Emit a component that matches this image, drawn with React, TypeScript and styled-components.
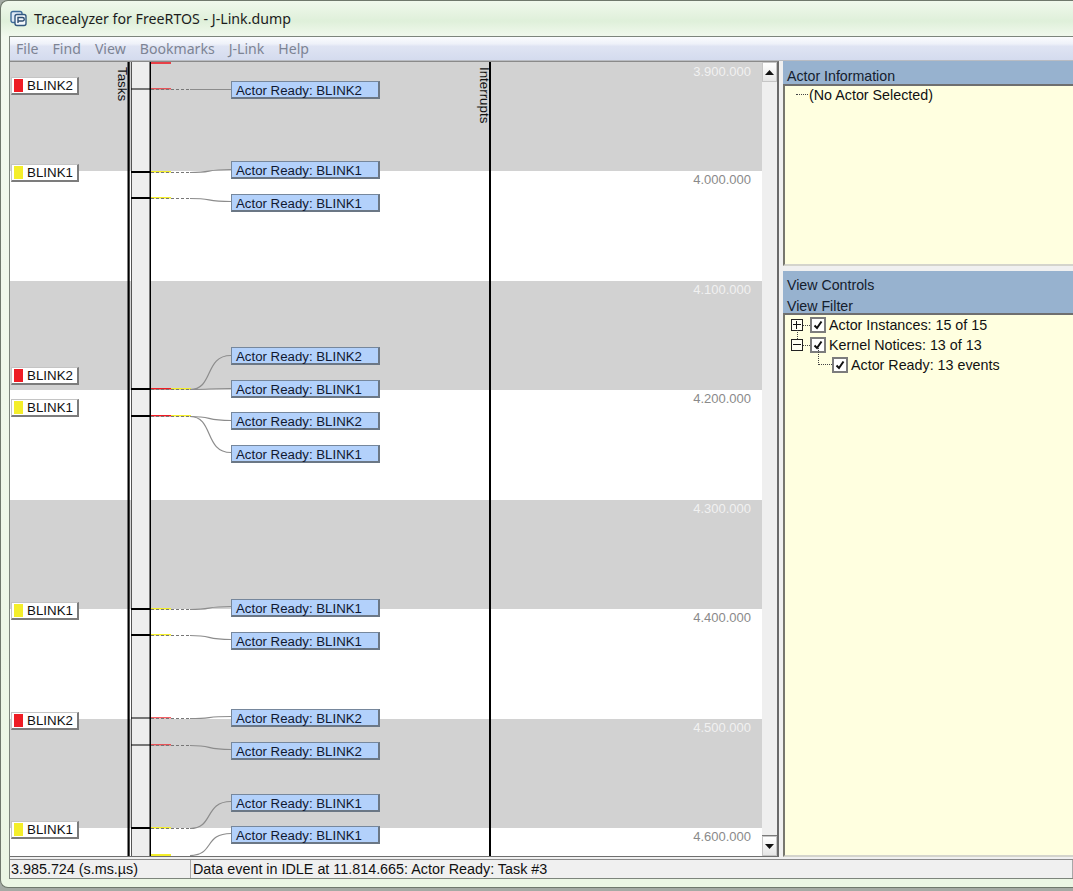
import React from "react";
import styled, { createGlobalStyle } from "styled-components";

const GlobalStyle = createGlobalStyle`
  html, body {
    margin: 0;
    padding: 0;
    background: #a4aaa4;
    overflow: hidden;
  }
  * { box-sizing: border-box; }
`;

const Window = styled.div`
  width: 1073px;
  height: 888px;
  padding: 0 0 8px 8px;
  display: flex;
  flex-direction: column;
  background: linear-gradient(180deg, #f0f8ec 0, #dff0da 20px, #f2f9ee 36px, #ebf6e4 100%);
  border-top: 1px solid #6f786c;
  border-left: 1px solid #6f786c;
  border-bottom: 1px solid #6f786c;
  border-radius: 8px 0 0 8px;
  font-family: "Liberation Sans", Arial, sans-serif;
  color: #111;
  overflow: hidden;
`;

const TitleBar = styled.div`
  height: 35px;
  display: flex;
  align-items: center;
  gap: 7px;
  padding-left: 1px;
  flex-shrink: 0;
`;

const TitleText = styled.span`
  font-family: "Noto Sans", sans-serif;
  font-size: 14.2px;
  color: #1c1c1c;
`;

const Client = styled.div`
  flex: 1;
  min-height: 0;
  display: flex;
  flex-direction: column;
  background: #f0f0f0;
  border-top: 1px solid #7d857c;
  border-left: 1px solid #7d857c;
  border-bottom: 1px solid #7d857c;
`;

const MenuBar = styled.nav`
  height: 24px;
  flex-shrink: 0;
  display: flex;
  align-items: center;
  gap: 14px;
  padding-left: 6px;
  background: linear-gradient(180deg, #fbfcfe 0, #eef1f9 30%, #dfe4f3 40%, #d4dbee 100%);
  border-bottom: 1px solid #b9bcc2;
`;

const MenuItem = styled.span`
  font-family: "Noto Sans", sans-serif;
  font-size: 14.1px;
  color: #7d8494;
`;

const Main = styled.div`
  height: 796px;
  flex-shrink: 0;
  display: flex;
`;

const TracePanel = styled.div`
  width: 769px;
  display: flex;
  border-top: 1px solid #8a8a8a;
  border-bottom: 1px solid #6f6f6f;
  border-right: 2px solid #6a6a6a;
`;

const Canvas = styled.div`
  position: relative;
  flex: 1;
  overflow: hidden;
  display: flex;
  flex-direction: column;
`;

const Band = styled.div`
  height: 110px;
  flex-shrink: 0;
  background: #fff;
  color: #8a8a8a;
  padding: 1px 11px 0 0;
  text-align: right;
  font-size: 13px;
  line-height: 16px;

  &:nth-child(odd) {
    height: 109px;
    background: #d2d2d2;
    color: #f1f1f1;
  }
  &:first-child {
    padding-top: 2px;
  }
  &:last-of-type {
    flex: 1;
    height: auto;
  }
`;

const Chart = styled.svg`
  position: absolute;
  inset: 0;
  width: 100%;
  height: 100%;
`;

const AxisTitle = styled.span<{ $x: number; $y: number }>`
  position: absolute;
  left: ${(p) => p.$x}px;
  top: ${(p) => p.$y}px;
  writing-mode: vertical-rl;
  font-size: 13.33px;
  line-height: 14px;
  color: #111;
`;

const ActorLabel = styled.div<{ $y: number }>`
  position: absolute;
  left: 1px;
  top: ${(p) => p.$y}px;
  width: 68px;
  height: 18px;
  display: flex;
  align-items: center;
  padding-left: 2px;
  gap: 4px;
  background: #fff;
  border: 1px solid #c4c4c4;
  border-right: 2px solid #7c7c7c;
  border-bottom: 2px solid #7c7c7c;
  font-size: 13.33px;
  color: #111;
`;

const Swatch = styled.i<{ $color: string }>`
  width: 9px;
  height: 13px;
  background: ${(p) => p.$color};
`;

const EventBox = styled.div<{ $y: number }>`
  position: absolute;
  left: 221px;
  top: ${(p) => p.$y}px;
  width: 149px;
  height: 18px;
  padding-left: 4px;
  background: #b3d1fb;
  border: 1px solid #76879c;
  border-right: 2px solid #6b7785;
  border-bottom: 2px solid #6b7785;
  font-size: 13.25px;
  line-height: 17px;
  color: #101830;
  white-space: nowrap;
`;

const Scrollbar = styled.div`
  width: 15px;
  flex-shrink: 0;
  display: flex;
  flex-direction: column;
  background: #f0f0f0;
`;

const ScrollButton = styled.div`
  height: 20px;
  flex-shrink: 0;
  display: flex;
  align-items: center;
  justify-content: center;
  background: linear-gradient(180deg, #ffffff, #e6e6e6);
  border: 1px solid #c6c6c6;
`;

const ScrollTrack = styled.div`
  flex: 1;
  background: #efefef;
  border-bottom: 1px solid #7a7a7a;
`;

const SidePanels = styled.div`
  flex: 1;
  min-width: 0;
  margin-left: 4px;
  display: flex;
  flex-direction: column;
`;

const Panel = styled.section<{ $height?: number }>`
  display: flex;
  flex-direction: column;
  flex: ${(p) => (p.$height ? `0 0 ${p.$height}px` : "1")};
  min-height: 0;
`;

const PanelHeader = styled.header`
  background: #97b2cf;
  padding-left: 4px;
  font-size: 14.2px;
  line-height: 21px;
  color: #14202e;
  flex-shrink: 0;
`;

const ActorHeader = styled(PanelHeader)`
  height: 23px;
  padding-top: 7px;
  line-height: 17px;
`;

const ControlsHeader = styled(PanelHeader)`
  height: 42px;
  padding-top: 4px;
`;

const PanelBody = styled.div`
  flex: 1;
  position: relative;
  background: #ffffe0;
  border-top: 2px solid #6f6f6f;
  border-left: 2px solid #77776e;
  border-bottom: 2px solid #d4d4cc;
  font-size: 14.3px;
  color: #111;
`;

const Splitter = styled.div`
  height: 5px;
  flex-shrink: 0;
  background: #f0f0f0;
`;

const TreeRow = styled.div<{ $indent?: number }>`
  position: relative;
  height: 20px;
  display: flex;
  align-items: center;
  padding-left: ${(p) => p.$indent ?? 6}px;
  white-space: nowrap;
`;

const RootLeaf = styled(TreeRow)`
  height: 17px;
  padding-left: 24px;

  &::before {
    content: "";
    position: absolute;
    left: 11px;
    top: 8px;
    width: 12px;
    border-top: 1px dotted #444;
  }
`;

const Expander = styled.i`
  position: relative;
  width: 12px;
  height: 12px;
  flex-shrink: 0;
  margin-right: 7px;
  border: 1px solid #222;
  background: #fffff2;
  display: flex;

  &::after {
    content: "";
    position: absolute;
    left: 11px;
    top: 5px;
    width: 7px;
    border-top: 1px dotted #444;
  }
`;

const ExpanderLink = styled.i`
  position: absolute;
  left: 12px;
  top: -5px;
  height: 9px;
  border-left: 1px dotted #444;
`;

const ChildLink = styled.i`
  position: absolute;
  left: 33px;
  top: -7px;
  width: 14px;
  height: 17px;
  border-left: 1px dotted #444;
  border-bottom: 1px dotted #444;
`;

const CheckBox = styled.span`
  width: 16px;
  height: 16px;
  flex-shrink: 0;
  margin-right: 3px;
  display: flex;
  align-items: center;
  justify-content: center;
  background: #fff;
  border: 2px solid #7c7c7c;
`;

const StatusBar = styled.footer`
  flex: 1;
  display: flex;
  margin-top: 2px;
  border-top: 1px solid #8a8a8a;
  font-size: 14.35px;
  color: #111;
`;

const StatusCell = styled.div<{ $width?: number }>`
  flex: ${(p) => (p.$width ? `0 0 ${p.$width}px` : "1")};
  display: flex;
  align-items: center;
  padding-left: ${(p) => (p.$width ? 1 : 2)}px;
  border-right: 1px solid #a8a8a8;
  white-space: nowrap;
`;

const RED = "#ee1c24";
const YELLOW = "#f4ee2a";

type Link = { from: number; to: number };
type Mark = { y: number; heavy: boolean; colors: string[] };

// canvas origin is 10,62 in the screenshot
const marks: Mark[] = [
  { y: 27, heavy: false, colors: [RED] },
  { y: 110, heavy: true, colors: [YELLOW] },
  { y: 136, heavy: true, colors: [YELLOW] },
  { y: 327, heavy: true, colors: [RED, YELLOW] },
  { y: 354, heavy: true, colors: [RED, YELLOW] },
  { y: 547, heavy: true, colors: [YELLOW] },
  { y: 573, heavy: true, colors: [YELLOW] },
  { y: 656, heavy: false, colors: [RED] },
  { y: 683, heavy: false, colors: [RED] },
  { y: 766, heavy: true, colors: [YELLOW] },
];

const links: Link[] = [
  { from: 27, to: 27 },
  { from: 110, to: 107 },
  { from: 136, to: 139 },
  { from: 327, to: 293 },
  { from: 327, to: 326 },
  { from: 354, to: 358 },
  { from: 354, to: 390 },
  { from: 547, to: 544 },
  { from: 573, to: 577 },
  { from: 656, to: 654 },
  { from: 683, to: 687 },
  { from: 766, to: 739 },
  { from: 793, to: 771 },
];

const events = [
  { y: 19, name: "BLINK2" },
  { y: 99, name: "BLINK1" },
  { y: 132, name: "BLINK1" },
  { y: 285, name: "BLINK2" },
  { y: 318, name: "BLINK1" },
  { y: 350, name: "BLINK2" },
  { y: 383, name: "BLINK1" },
  { y: 537, name: "BLINK1" },
  { y: 570, name: "BLINK1" },
  { y: 647, name: "BLINK2" },
  { y: 680, name: "BLINK2" },
  { y: 732, name: "BLINK1" },
  { y: 764, name: "BLINK1" },
];

const actors = [
  { y: 15, name: "BLINK2", color: RED },
  { y: 102, name: "BLINK1", color: YELLOW },
  { y: 305, name: "BLINK2", color: RED },
  { y: 337, name: "BLINK1", color: YELLOW },
  { y: 540, name: "BLINK1", color: YELLOW },
  { y: 650, name: "BLINK2", color: RED },
  { y: 759, name: "BLINK1", color: YELLOW },
];

const times = ["3.900.000", "4.000.000", "4.100.000", "4.200.000", "4.300.000", "4.400.000", "4.500.000", "4.600.000"];

const AppIcon = () => (
  <svg width="17" height="17" viewBox="0 0 17 17" fill="none">
    <rect x="1" y="1.5" width="11" height="11" rx="2" fill="#dfe9f5" stroke="#3f6c9a" strokeWidth="1.4" />
    <rect x="5" y="4.5" width="11" height="11" rx="2" fill="#f3f7fb" stroke="#33587f" strokeWidth="1.4" />
    <path d="M8 13V7.5h4.5a1.4 1.4 0 0 1 0 3.5H8" stroke="#2c4c70" strokeWidth="1.4" />
  </svg>
);

const Arrow = ({ down }: { down?: boolean }) => (
  <svg width="9" height="5" viewBox="0 0 9 5">
    <path d={down ? "M0 0h9L4.5 5z" : "M0 5h9L4.5 0z"} fill="#111" />
  </svg>
);

const Check = () => (
  <svg width="10" height="10" viewBox="0 0 10 10" fill="none">
    <path d="M1.5 5.5 4 8l4.5-6.5" stroke="#111" strokeWidth="2" />
  </svg>
);

const ExpanderSign = ({ open }: { open?: boolean }) => (
  <svg width="10" height="10" viewBox="0 0 10 10">
    <path d={open ? "M1 4.5h8" : "M1 4.5h8M4.5 1v8"} stroke="#111" fill="none" />
  </svg>
);

const TraceChart = () => (
  <Chart>
    <rect x="121" y="0" width="19" height="800" fill="#eeeeee" />
    <rect x="117.5" y="0" width="2.2" height="800" fill="#000" />
    <rect x="121" y="0" width="1" height="800" fill="#555" />
    <rect x="139.5" y="0" width="1.5" height="800" fill="#000" />
    <rect x="479" y="0" width="2" height="800" fill="#000" />
    <rect x="141" y="0" width="20" height="2" fill={RED} opacity="0.8" />
    <rect x="141" y="792" width="20" height="2" fill={YELLOW} />
    {marks.map((m) => (
      <g key={m.y}>
        <rect x="121" y={m.y - (m.heavy ? 1 : 0.5)} width="19" height={m.heavy ? 2 : 1} fill="#000" />
        {m.colors.map((c, i) => (
          <rect key={c} x={141 + i * 20} y={m.y - 1} width="20" height="1.5" fill={c} opacity={m.heavy ? 1 : 0.7} />
        ))}
        <line x1="141" x2="180" y1={m.y + 0.5} y2={m.y + 0.5} stroke="#777" strokeDasharray="3 2" />
      </g>
    ))}
    {links.map((l, i) => (
      <path
        key={i}
        d={`M180 ${l.from + 0.5}C204 ${l.from + 0.5} 194 ${l.to + 0.5} 221 ${l.to + 0.5}`}
        fill="none"
        stroke="#8c8c8c"
        strokeWidth="1.2"
      />
    ))}
  </Chart>
);

export default function App() {
  return (
    <>
      <GlobalStyle />
      <Window>
        <TitleBar>
          <AppIcon />
          <TitleText>Tracealyzer for FreeRTOS - J-Link.dump</TitleText>
        </TitleBar>
        <Client>
          <MenuBar>
            {["File", "Find", "View", "Bookmarks", "J-Link", "Help"].map((m) => (
              <MenuItem key={m}>{m}</MenuItem>
            ))}
          </MenuBar>
          <Main>
            <TracePanel>
              <Canvas>
                {times.map((t) => (
                  <Band key={t}>{t}</Band>
                ))}
                <TraceChart />
                <AxisTitle $x={105} $y={5}>Tasks</AxisTitle>
                <AxisTitle $x={467} $y={5}>Interrupts</AxisTitle>
                {actors.map((a) => (
                  <ActorLabel key={a.y} $y={a.y}>
                    <Swatch $color={a.color} />
                    {a.name}
                  </ActorLabel>
                ))}
                {events.map((e) => (
                  <EventBox key={e.y} $y={e.y}>Actor Ready: {e.name}</EventBox>
                ))}
              </Canvas>
              <Scrollbar>
                <ScrollButton><Arrow /></ScrollButton>
                <ScrollTrack />
                <ScrollButton><Arrow down /></ScrollButton>
              </Scrollbar>
            </TracePanel>
            <SidePanels>
              <Panel $height={205}>
                <ActorHeader>Actor Information</ActorHeader>
                <PanelBody>
                  <RootLeaf>(No Actor Selected)</RootLeaf>
                </PanelBody>
              </Panel>
              <Splitter />
              <Panel>
                <ControlsHeader>
                  View Controls
                  <br />
                  View Filter
                </ControlsHeader>
                <PanelBody>
                  <TreeRow>
                    <Expander><ExpanderSign /></Expander>
                    <CheckBox><Check /></CheckBox>
                    Actor Instances: 15 of 15
                  </TreeRow>
                  <TreeRow>
                    <ExpanderLink />
                    <Expander><ExpanderSign open /></Expander>
                    <CheckBox><Check /></CheckBox>
                    Kernel Notices: 13 of 13
                  </TreeRow>
                  <TreeRow $indent={47}>
                    <ChildLink />
                    <CheckBox><Check /></CheckBox>
                    Actor Ready: 13 events
                  </TreeRow>
                </PanelBody>
              </Panel>
            </SidePanels>
          </Main>
          <StatusBar>
            <StatusCell $width={181}>3.985.724 (s.ms.µs)</StatusCell>
            <StatusCell>Data event in IDLE at 11.814.665: Actor Ready: Task #3</StatusCell>
          </StatusBar>
        </Client>
      </Window>
    </>
  );
}
